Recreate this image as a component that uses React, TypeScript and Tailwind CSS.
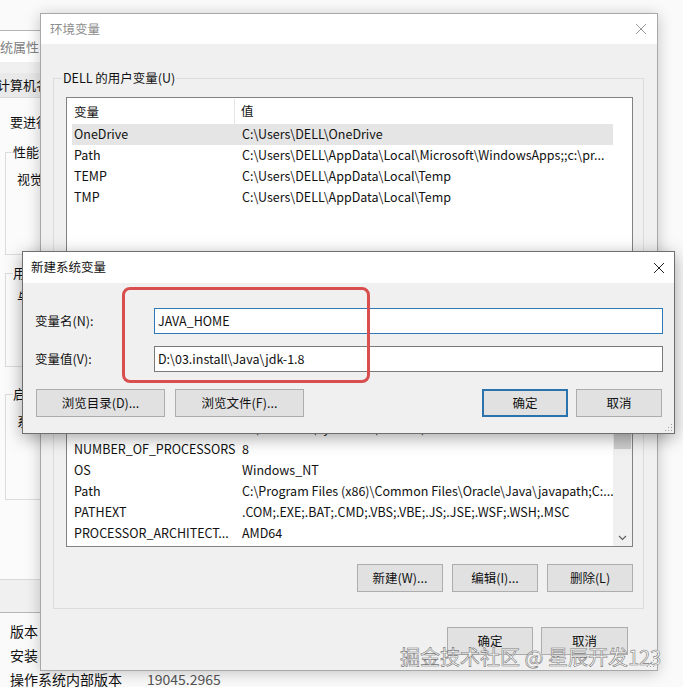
import clsx from "clsx";

const userVars = [
    ["OneDrive", "C:\\Users\\DELL\\OneDrive"],
    ["Path", "C:\\Users\\DELL\\AppData\\Local\\Microsoft\\WindowsApps;;c:\\pr..."],
    ["TEMP", "C:\\Users\\DELL\\AppData\\Local\\Temp"],
    ["TMP", "C:\\Users\\DELL\\AppData\\Local\\Temp"],
];

const sysVars = [
    ["ComSpec", "C:\\Windows\\system32\\cmd.exe"],
    ["DriverData", "C:\\Windows\\System32\\Drivers\\DriverData"],
    ["NUMBER_OF_PROCESSORS", "8"],
    ["OS", "Windows_NT"],
    ["Path", "C:\\Program Files (x86)\\Common Files\\Oracle\\Java\\javapath;C:..."],
    ["PATHEXT", ".COM;.EXE;.BAT;.CMD;.VBS;.VBE;.JS;.JSE;.WSF;.WSH;.MSC"],
    ["PROCESSOR_ARCHITECT...", "AMD64"],
];

function CloseX({color, size}: {color: string; size: number}) {
    return (
        <svg width={size} height={size} viewBox="0 0 12 12">
            <path d="M1 1L11 11M11 1L1 11" stroke={color} strokeWidth="1" fill="none"/>
        </svg>
    );
}

function Grip() {
    return (
        <svg width="10" height="10" viewBox="0 0 10 10">
            {[[8, 2], [8, 5], [5, 5], [8, 8], [5, 8], [2, 8]].map(([x, y]) => (
                <rect key={`${x}-${y}`} x={x} y={y} width="1" height="1" fill="#a0a0a0"/>
            ))}
        </svg>
    );
}

function Button({label, w, focus}: {label: string; w: string; focus?: boolean}) {
    return (
        <div
            className={clsx(
                "flex h-[28px] items-center justify-center bg-[#e1e1e1] text-[12.5px] text-[#111]",
                w,
                focus ? "border-2 border-[#2a73ad]" : "border border-[#adadad]"
            )}
        >
            {label}
        </div>
    );
}

function VarList({rows, selected, height, scroll}: {rows: string[][]; selected?: number; height: string; scroll?: boolean}) {
    return (
        <div className={clsx("flex w-[567px] overflow-hidden border border-[#828282] bg-white", height)}>
            <div className="flex w-[546px] flex-col overflow-hidden pl-[5px]">
                <div className="flex h-[26px] shrink-0 items-center">
                    <span className="w-[163px] shrink-0 border-r border-[#e5e5e5] pl-[2px] leading-[25px]">变量</span>
                    <span className="pl-[6px]">值</span>
                </div>
                {rows.map(([name, value], i) => (
                    <div
                        key={name + i}
                        className={clsx("flex h-[21px] shrink-0 items-center overflow-hidden whitespace-nowrap", i === selected && "bg-[#e5e5e5]")}
                    >
                        <span className="w-[170px] shrink-0 overflow-hidden pl-[2px]">{name}</span>
                        <span>{value}</span>
                    </div>
                ))}
            </div>
            {scroll ? (
                <div className="flex flex-1 flex-col bg-[#f0f0f0]">
                    <div className="h-[17px]"/>
                    <div className="mx-[1px] mt-[12px] h-[49px] bg-[#cdcdcd]"/>
                    <div className="flex-1"/>
                    <div className="flex h-[17px] items-center justify-center">
                        <svg width="9" height="6" viewBox="0 0 9 6">
                            <path d="M1 1L4.5 4.5L8 1" stroke="#606060" strokeWidth="1.2" fill="none"/>
                        </svg>
                    </div>
                </div>
            ) : (
                <div className="flex-1"/>
            )}
        </div>
    );
}

function Group({label, className, children}: {label: string; className: string; children: React.ReactNode}) {
    return (
        <div className={clsx("relative border border-[#dcdcdc]", className)}>
            <span className="absolute -top-[10px] left-[8px] bg-[#f0f0f0] px-[1px] leading-[18px]">
                {label}
            </span>
            {children}
        </div>
    );
}

export default function App() {
    return (
        <div className="relative h-[687px] w-[683px] overflow-hidden bg-[#fafafa] text-[12.5px] text-[#111] [font-family:'Noto_Sans_CJK_SC',sans-serif]">
            {/* 系统属性, behind */}
            <div className="absolute left-[-14px] top-[30px] flex h-[583px] w-[120px] flex-col border border-[#b5b5b5] bg-[#f0f0f0] text-[13px]">
                <div className="flex h-[31px] items-center bg-white text-[#808080]">系统属性</div>
                <div className="flex h-[35px] items-end pl-[9px]">
                    <div className="flex h-[24px] items-center whitespace-nowrap bg-[#e9e9e9] pl-[1px]">计算机名</div>
                </div>
                <div className="mx-[4px] flex h-[483px] flex-col whitespace-nowrap border border-[#d9d9d9] bg-[#fbfbfb] pl-[18px] pt-[15px]">
                    <div className="leading-[18px]">要进行大多数更改，你必须作为管理员登录。</div>
                    <div className="relative -ml-[5px] mt-[21px] h-[103px] border border-[#dcdcdc] pl-[11px] pt-[17px]">
                        <span className="absolute -top-[10px] left-[7px] bg-[#fbfbfb] leading-[18px]">性能</span>
                        <div className="leading-[18px]">视觉效果，处理器计划，内存使用，以及虚拟内存</div>
                    </div>
                    <div className="relative -ml-[5px] mt-[18px] h-[94px] border border-[#dcdcdc] pl-[11px] pt-[14px]">
                        <span className="absolute -top-[10px] left-[7px] bg-[#fbfbfb] leading-[18px]">用户配置文件</span>
                        <div className="leading-[18px]">与登录帐户相关的桌面设置</div>
                    </div>
                    <div className="relative -ml-[5px] mt-[27px] h-[106px] border border-[#dcdcdc] pl-[11px] pt-[17px]">
                        <span className="absolute -top-[10px] left-[7px] bg-[#fbfbfb] leading-[18px]">启动和故障恢复</span>
                        <div className="leading-[18px]">系统启动、系统故障和调试信息</div>
                    </div>
                </div>
            </div>

            {/* 关于 page text, behind */}
            <div className="absolute left-[10px] top-[619px] flex flex-col whitespace-nowrap text-[14px] leading-[24px]">
                <div>版本</div>
                <div>安装日期</div>
                <div className="flex">
                    <span className="w-[137px]">操作系统内部版本</span>
                    <span className="text-[#555]">19045.2965</span>
                </div>
            </div>

            {/* 环境变量 window */}
            <div className="absolute left-[40px] top-[13px] flex h-[658px] w-[618px] flex-col border border-[#a8a8a8] bg-[#f0f0f0] shadow-[0_2px_14px_rgba(0,0,0,0.22)]">
                <div className="flex h-[30px] shrink-0 items-center justify-between bg-white pl-[9px] pr-[10px]">
                    <span className="text-[#8c8c8c]">环境变量</span>
                    <CloseX color="#9a9a9a" size={12}/>
                </div>
                <div className="flex flex-col pl-[12px] pr-[13px] pt-[34px]">
                    <Group label="DELL 的用户变量(U)" className="h-[262px] pl-[12px] pr-[10px] pt-[18px]">
                        <VarList rows={userVars} selected={0} height="h-[183px]"/>
                    </Group>
                    <Group label="系统变量(S)" className="mt-[11px] pb-[16px] pl-[12px] pr-[10px] pt-[18px]">
                        <VarList rows={sysVars} height="h-[177px]" scroll/>
                        <div className="mt-[17px] flex justify-end gap-[9px]">
                            <Button label="新建(W)..." w="w-[86px]"/>
                            <Button label="编辑(I)..." w="w-[86px]"/>
                            <Button label="删除(L)" w="w-[86px]"/>
                        </div>
                    </Group>
                    <div className="mt-[18px] flex justify-end gap-[8px] pr-[16px]">
                        <Button label="确定" w="w-[86px]"/>
                        <Button label="取消" w="w-[87px]"/>
                    </div>
                </div>
                <div className="absolute bottom-[2px] right-[2px]">
                    <Grip/>
                </div>
            </div>

            {/* 新建系统变量 dialog */}
            <div className="absolute left-[22px] top-[251px] flex h-[183px] w-[653px] flex-col border border-[#6f6f6f] bg-[#f0f0f0] shadow-[0_4px_16px_rgba(0,0,0,0.35)]">
                <div className="flex h-[31px] shrink-0 items-center justify-between bg-white pl-[8px] pr-[9px]">
                    <span>新建系统变量</span>
                    <CloseX color="#222" size={12}/>
                </div>
                <div className="flex flex-col pl-[12px] pr-[11px] pt-[25px]">
                    <div className="flex items-center">
                        <span className="w-[119px]">变量名(N):</span>
                        <div className="flex h-[26px] flex-1 items-center border border-[#2f78b8] bg-white pl-[3px]">
                            JAVA_HOME
                        </div>
                    </div>
                    <div className="mt-[12px] flex items-center">
                        <span className="w-[119px]">变量值(V):</span>
                        <div className="flex h-[26px] flex-1 items-center border border-[#7a7a7a] bg-white pl-[3px]">
                            D:\03.install\Java\jdk-1.8
                        </div>
                    </div>
                    <div className="mt-[17px] flex items-center pl-[1px]">
                        <Button label="浏览目录(D)..." w="w-[129px]"/>
                        <div className="ml-[10px]">
                            <Button label="浏览文件(F)..." w="w-[129px]"/>
                        </div>
                        <div className="ml-auto flex gap-[8px] pr-[1px]">
                            <Button label="确定" w="w-[86px]" focus/>
                            <Button label="取消" w="w-[86px]"/>
                        </div>
                    </div>
                </div>
                <div className="absolute bottom-[1px] right-[1px]">
                    <Grip/>
                </div>
            </div>

            {/* red annotation box */}
            <div className="absolute left-[122px] top-[287px] h-[96px] w-[248px] rounded-[8px] border-[3px] border-[#d94f4f]"/>

            {/* watermark */}
            <div className="absolute left-[400px] top-[643px] whitespace-nowrap text-[20px] leading-[28px] text-white [-webkit-text-stroke:0.6px_#777]">
                掘金技术社区 @ 星辰开发123
            </div>
        </div>
    );
}
